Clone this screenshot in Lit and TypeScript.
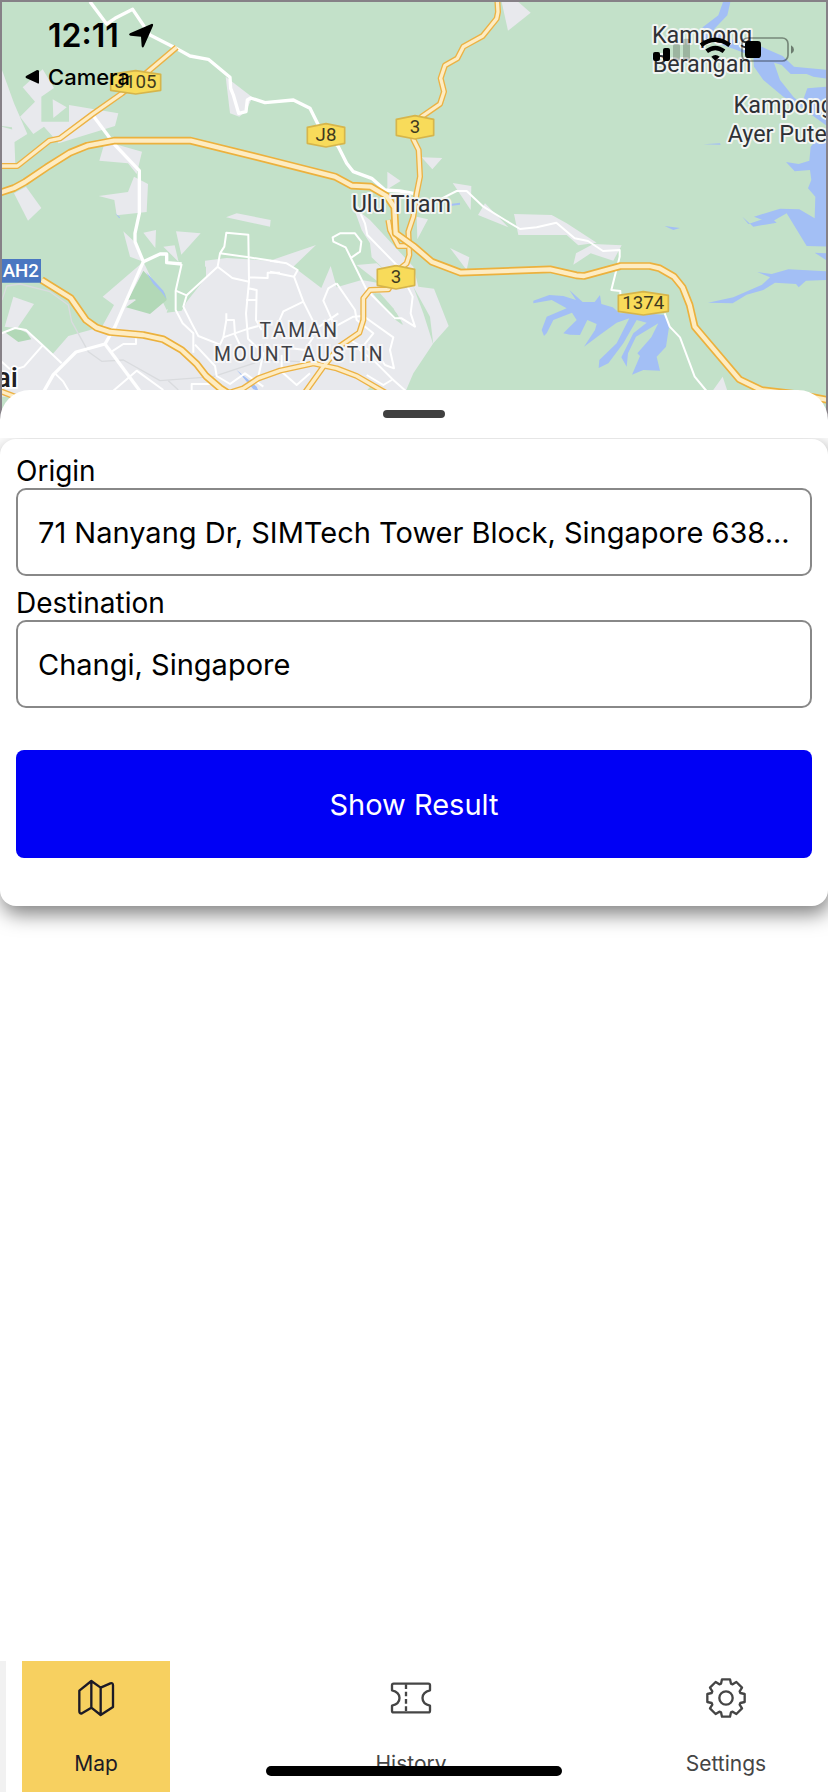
import { LitElement, html, svg, css } from "lit";
import { customElement, state } from "lit/decorators.js";

type Shield = { x: number; y: number; half: number; text: string };

const shields: Shield[] = [
  { x: 407, y: 247, half: 75, text: "J105" },
  { x: 978, y: 406, half: 56, text: "J8" },
  { x: 1245, y: 382, half: 56, text: "3" },
  { x: 1188, y: 832, half: 56, text: "3" },
  { x: 1930, y: 910, half: 75, text: "1374" },
];

const highways = [
  "M0 578 42 564 75 546 140 502 210 458 262 437 342 422H572L815 482 1005 530 1055 557 1112 560 1160 588 1183 622 1187 700 1240 738 1295 785 1382 818 1650 808 1729 826 1752 828 1862 798H1949L1979 805 2022 830 2048 862 2069 915 2084 980 2218 1138 2284 1170 2394 1183 2484 1200",
  "M125 840 212 894 258 960 290 983 330 996 430 1005 490 1018 545 1050 590 1092 618 1128 660 1164 700 1190",
];

const mainRoads = [
  "M0 498H52L148 422 180 415 278 342 366 280 440 218 530 142",
  "M1492 0 1494 36 1490 56 1448 108 1390 140 1372 175 1335 196 1322 235 1332 275 1320 312 1265 350 1240 385V418L1256 450 1260 530 1250 580 1240 650 1225 695 1228 765 1220 790 1205 802 1165 868 1110 870 1090 895V960L1078 998 1020 1038 970 1100 916 1176",
  "M1165 660 1170 690 1195 738H1222",
  "M0 1173 50 1192",
  "M690 1178 730 1165 775 1135 840 1112 940 1090 1010 1105 1070 1128 1160 1180",
];

const whiteRoads = [
  "M270 5 320 72 345 55 398 28 450 105 525 143 570 168 625 178 690 232 692 265 700 285 716 340 738 335 742 300 752 294 795 308 880 300 930 325 955 375 1015 440 1040 490 1060 515 1115 535 1155 570 1200 573 1240 580",
  "M278 345 345 435 418 512V640L405 700V725L430 785 345 980 315 1032 228 1056 160 1124 128 1180",
  "M315 1032 422 1176",
  "M430 785 480 762H500V788L545 792",
];

const streets = [
  "M1320 598 1370 573H1400L1450 620 1515 660 1560 687 1610 682 1669 668 1724 715 1764 723 1809 753 1859 750V770L1834 870 1861 873V890",
  "M1994 940 2009 980 2040 1012 2084 1130 2122 1176",
  "M545 792 527 872V930L548 970 580 1000V1058",
  "M527 872 560 886 550 920 575 970 595 1008 660 1034 670 1012 745 986 775 978",
  "M560 886 653 800 660 760 673 740 679 698 745 704 747 845 697 834 653 800M660 760 747 772 840 786M747 832 803 834V818H840",
  "M747 845 738 940 744 1016 790 1060 775 1130M745 865 770 870 768 960 785 990M738 900H770M679 940V960L670 1012M679 960H702L705 1004 720 1035",
  "M5 1000 45 984 78 990 128 1036 185 1090M128 1036 72 1100 40 1110M5 1085 30 1108M165 1120 190 1145 210 1180",
  "M340 1172 410 1112 490 1170M335 1055 370 1032H408V1015M585 1034 645 1098 650 1128 690 1152 735 1120 790 1160M575 1172V1152H640",
  "M1072 620 1095 670 1102 705 1190 795 1238 890 1232 940 1245 980 1205 955H1185L1100 870 1037 742 1000 725 998 712 1020 700H1065L1084 725 1080 755 1055 772",
  "M810 782 860 790 893 810 882 830 810 815M882 830 910 905 950 985 1015 940M910 905 850 934 830 980M1010 850 985 865 970 902 1005 980 1060 950 1090 948 1180 1012 1170 1050 1182 1105 1155 1095 1130 1060 1085 1040 1050 1020",
  "M1010 850 1065 930 1070 960 1120 1000 1080 1050 1130 1090 1180 1140 1225 1180M1100 1125 1150 1155 1175 1140M940 1010 915 1050 840 1040 810 1060M845 1065V1115L890 1155 930 1120",
];

const urban = [
  "M6 210 42 310 82 402 40 428 36 382 6 378Z",
  "M68 262 128 208 162 264 124 290V365H207V315L355 340 345 378 176 430 132 380 100 402 60 350 105 305Z",
  "M158 298 200 322 160 354Z",
  "M6 380 42 390 46 494 6 492Z",
  "M315 424 426 455 410 522 384 490 298 482Z",
  "M402 530 444 552 440 636 350 646 343 600 296 588 384 576Z",
  "M42 580 78 560 124 624 84 662Z",
  "M677 230 757 292 738 334 718 350 690 340Z",
  "M1505 6H1555L1592 38 1524 92Z",
  "M1265 472 1327 474 1297 508ZM1162 515 1202 543 1162 568ZM1358 549 1414 558 1412 630Z",
  "M678 652 710 640 812 660 810 680Z",
  "M370 694 398 720 430 785 390 770ZM430 698 468 690 466 744ZM528 694 602 700 544 764ZM490 740 524 736 536 786Z",
  "M430 785 308 890 342 915 306 980 205 1008 158 1062 130 1036 80 990 6 996V1190H1210L1240 1120 1300 1030 1346 978 1302 866 1255 860 1240 800 1110 660 1060 620 1085 690 1110 730 1115 772 1164 820 1130 790 1070 795 1140 850 1085 840 1010 862 992 798 964 864 880 800 948 735 810 782 680 774 615 782V830L500 930Z",
  "M40 890 102 912 52 985 14 980Z",
  "M1250 650 1284 658 1252 718ZM1350 744 1408 772 1400 810ZM1455 610 1525 682 1434 645ZM1542 642 1655 645 1700 670 1790 728 1735 736 1700 705H1555Z",
  "M1728 760 1780 732 1865 736 1840 782 1772 760 1720 794Z",
  "M2138 1172 2168 1130 2182 1172ZM1644 648 1660 648 1680 664 1644 668Z",
];

const parks = [
  "M430 812 495 880 500 900 450 942 378 922 408 900 404 898 384 900Z",
  "M14 996 50 984 80 998 94 1018 55 1026Z",
];

const greens = [
  "M1118 870 1190 940 1210 975 1165 930ZM1240 860 1290 950 1300 1034 1270 940ZM1100 1172 1115 1155 1140 1174Z",
  "M548 784 618 800V832L560 905 545 932 500 938Z",
  "M1118 880 1140 880 1180 925 1208 975 1180 955Z",
];

const water = [
  "M2169 6H2191L2182 46 2142 88 2170 112 2240 130 2280 138 2348 168 2382 200 2484 210V236L2440 230 2420 222H2372L2345 195 2322 188 2340 240 2380 290 2405 312 2422 265 2484 260V740L2420 738 2360 640 2310 668 2262 650 2340 626 2398 628 2444 655 2446 590 2424 565 2434 540 2430 510 2384 514 2358 486 2396 492 2428 482 2432 440 2484 380 2395 316 2350 290 2290 240 2262 200 2260 170 2210 150 2110 115 2108 82 2155 46Z",
  "M2110 433 2160 430 2162 434ZM1994 678 2040 684 2020 690ZM2227 650 2245 672 2310 650 2330 668 2260 680Z",
  "M2444 758 2484 760V784ZM2272 816 2315 822 2365 808 2484 814V840L2418 842 2396 862 2388 852 2325 848 2290 870 2240 884 2198 910 2124 908 2200 892 2286 854 2310 832Z",
  "M1600 902 1648 885 1690 888 1728 900 1708 870 1748 906 1784 906 1800 885 1804 912 1838 922 1860 940 1920 938 1995 945 2008 975 1998 1040 1970 1070 1980 1112 1930 1110 1896 1124 1920 1068 1912 1060 1954 1012 1975 970 1908 1010 1884 1060 1880 1100 1864 1072 1900 1000 1940 968 1910 960 1870 1030 1825 1090 1796 1104 1798 1080 1850 1030 1888 955 1850 968 1800 1004 1752 1040 1785 990 1790 972 1762 960 1740 1005 1710 1004 1690 1000 1730 960 1716 938 1660 960 1640 1000 1632 1008 1625 990 1640 950 1700 925 1655 900 1600 910Z",
  "M1350 612 1380 608V614L1350 618ZM345 640 360 652 358 655ZM438 816 490 872 500 898 484 876 460 852ZM710 1110 770 1160 775 1172 760 1168ZM670 1074 685 1085 678 1090Z",
];

const shield = (s: Shield) => svg`
  <path class="shield" d="M${s.x - s.half} ${s.y - 24}L${s.x} ${s.y - 35} ${s.x + s.half} ${s.y - 24}V${s.y + 24}L${s.x} ${s.y + 35} ${s.x - s.half} ${s.y + 24}Z"></path>
  <text class="shield-text" x=${s.x} y=${s.y + 18}>${s.text}</text>`;

const paths = (cls: string, list: string[]) => list.map((d) => svg`<path class=${cls} d=${d}></path>`);

@customElement("road-map")
class RoadMap extends LitElement {
  static styles = css`
    :host { display: block; }
    svg { display: block; width: 100%; height: 436px; background: #c3e1c9; }
    path { fill: none; stroke-linejoin: round; }
    .urban { fill: #e8e9ed; }
    .green { fill: #c3e1c9; }
    .park { fill: #b2d8b7; }
    .water { fill: #a3bff5; }
    .rail { stroke: #d9dbde; stroke-width: 4; }
    .street { stroke: #fff; stroke-width: 6; }
    .white { stroke: #fff; stroke-width: 10; }
    .main-edge { stroke: #ecb244; stroke-width: 18; }
    .main-fill { stroke: #feecc2; stroke-width: 10; }
    .high-edge { stroke: #ecb13d; stroke-width: 23; }
    .high-fill { stroke: #feecc2; stroke-width: 13; }
    .shield { fill: #f8db5a; stroke: #d6b54b; stroke-width: 5; }
    text { font-family: Roboto, "Liberation Sans", sans-serif; }
    .shield-text { font-size: 56px; text-anchor: middle; fill: #3f3a20; }
    .ah { fill: #4a77c1; }
    .ah-text { font-size: 56px; font-weight: 500; fill: #fff; }
    .place { font-size: 70px; fill: #2f3136; stroke: #f2f5f3; stroke-width: 12; paint-order: stroke; stroke-linejoin: round; text-anchor: middle; }
    .district { font-size: 58px; letter-spacing: 8px; fill: #3f4146; stroke: #f6f6f8; stroke-width: 12; paint-order: stroke; text-anchor: middle; }
    .city { font-size: 84px; font-weight: 500; fill: #1f2023; stroke: #fff; stroke-width: 10; paint-order: stroke; text-anchor: end; }
  `;

  render() {
    return html`<svg viewBox="6 6 2472 1308" preserveAspectRatio="xMidYMin slice" role="img" aria-label="Map of Ulu Tiram">
      ${paths("urban", urban)} ${paths("green", greens)} ${paths("park", parks)} ${paths("water", water)}
      <path class="rail" d="M6 900 20 858 60 852 150 875 205 915 215 965 265 1055 305 1084 370 1080 480 1142 640 1130 790 1080 900 1085M505 1142 535 1170"></path>
      ${paths("street", streets)} ${paths("white", whiteRoads)}
      ${paths("main-edge", mainRoads)} ${paths("main-fill", mainRoads)}
      ${paths("high-edge", highways)} ${paths("high-fill", highways)}
      ${shields.map(shield)}
      <path class="ah" d="M0 777H123V848H0Z"></path>
      <text class="ah-text" x="8" y="832">AH2</text>
      <text class="place" x="1204" y="635">Ulu Tiram</text>
      <text class="place" x="2106" y="129">Kampong</text>
      <text class="place" x="2106" y="215">Berangan</text>
      <text class="place" x="2351" y="339">Kampong</text>
      <text class="place" x="2351" y="425">Ayer Puteh</text>
      <text class="district" x="899" y="1011">TAMAN</text>
      <text class="district" x="899" y="1083">MOUNT AUSTIN</text>
      <text class="city" x="54" y="1162">ai</text>
    </svg>`;
  }
}

const toothPath = (() => {
  const pts: string[] = [];
  for (let k = 0; k < 8; k++) {
    const a = (k * Math.PI) / 4;
    for (const [x, y] of [[-15, -43], [-12, -56], [12, -56], [15, -43]]) {
      pts.push(`${(x * Math.cos(a) - y * Math.sin(a)).toFixed(1)} ${(x * Math.sin(a) + y * Math.cos(a)).toFixed(1)}`);
    }
  }
  return `M${pts.join("L")}Z`;
})();

const tabs = [
  {
    name: "Map",
    icon: svg`<path d="M-50-22-14-51 14-31 43-44Q51-47 51-38V27L14 51-14 29-42 46Q-50 48-50 40ZM-14-51V29M14-31V51"></path>`,
  },
  {
    name: "History",
    icon: svg`<path d="M-52-43H52Q57-43 57-38V-23C27-16 27 16 57 23V38Q57 43 52 43H-52Q-57 43-57 38V23C-27 16-27-16-57-23V-38Q-57-43-52-43Z"></path><path d="M-15-41V43" stroke-dasharray="14 8"></path>`,
  },
  {
    name: "Settings",
    icon: svg`<path d=${toothPath}></path><circle r="20"></circle>`,
  },
];

@customElement("app-root")
class AppRoot extends LitElement {
  @state() private active = "Map";

  static styles = css`
    :host {
      display: flex; flex-direction: column; position: relative; min-height: 100vh;
      background: #fff; color: #000; font-family: Inter, "Liberation Sans", sans-serif;
      overflow: hidden;
    }
    .map { border: 2px solid #868187; border-bottom: 0; }
    .status {
      position: absolute; top: 0; left: 0; right: 0; padding: 16px 34px 0 24px;
      display: flex; justify-content: space-between; align-items: flex-start;
    }
    .clock { display: flex; align-items: center; gap: 9px; padding-left: 24px; font-size: 32px; line-height: 40px; font-weight: 600; }
    .back { display: flex; align-items: center; gap: 8px; font-size: 22px; line-height: 42px; font-weight: 500; color: inherit; text-decoration: none; }
    .status svg { display: block; }
    .signals { margin-top: 20px; }
    .grip { position: relative; z-index: 1; margin-top: -48px; height: 48px; background: #fff; border-radius: 30px 30px 0 0; display: flex; align-items: center; justify-content: center; }
    .handle { width: 62px; height: 8px; border-radius: 4px; background: #404040; }
    .card { margin-top: 1px; padding: 16px 16px 48px; background: #fff; border-radius: 16px; box-shadow: 2px 8px 20px rgba(0, 0, 0, 0.5); display: flex; flex-direction: column; }
    .field { display: flex; flex-direction: column; margin-bottom: 11px; }
    label { font-size: 28px; line-height: 33px; }
    input {
      box-sizing: border-box; width: 100%; height: 88px; padding: 0 20px; border: 2px solid #888; border-radius: 10px;
      font: inherit; font-size: 29px; color: #000; background: #fff; text-overflow: ellipsis;
    }
    .submit { margin-top: 31px; height: 108px; border: 0; border-radius: 8px; background: #0000f5; color: #fff; font: inherit; font-size: 29px; }
    .nav { margin-top: auto; display: flex; justify-content: space-between; padding: 0 28px 0 16px; border-left: 6px solid #f1f1f1; }
    .tab {
      width: 148px; padding: 15px 0 16px; border: 0; background: none; color: #454545;
      font: inherit; font-size: 21px; line-height: 24px; display: flex; flex-direction: column; align-items: center; gap: 32px;
    }
    .tab.active { background: #f7d060; color: #1c1a26; }
    .tab svg { width: 44px; height: 44px; fill: none; stroke: currentColor; stroke-width: 7; stroke-linejoin: round; }
    .home { position: absolute; bottom: 16px; left: 0; right: 0; margin: 0 auto; width: 296px; height: 10px; border-radius: 5px; background: #000; }
  `;

  render() {
    return html`
      <road-map class="map"></road-map>
      <div class="status">
        <div>
          <div class="clock">
            <span>12:11</span>
            <svg width="26" height="26" viewBox="390 70 78 78"><path d="M462 72Q467 72 465 78L438 140Q434 147 431 140L429 111 398 108Q390 106 396 101Z"></path></svg>
          </div>
          <a class="back" href="#">
            <svg width="16" height="16" viewBox="0 0 16 16"><path d="M15 2V14Q15 15 13 14L2 9Q1 8 2 7L13 1Q15 1 15 2Z"></path></svg>
            Camera
          </a>
        </div>
        <svg class="signals" width="141" height="27" viewBox="315 108 423 81" role="img" aria-label="Signal, Wi-Fi and battery">
          <rect x="315" y="156" width="21" height="27" rx="6"></rect>
          <rect x="345" y="144" width="21" height="39" rx="6"></rect>
          <rect x="375" y="132" width="21" height="51" rx="6" opacity=".2"></rect>
          <rect x="405" y="116" width="21" height="67" rx="6" opacity=".2"></rect>
          <g fill="none" stroke="#000" stroke-width="13"><path d="M459 136Q502 103 545 136"></path><path d="M476 154Q502 134 528 154"></path></g>
          <path d="M490 170Q502 160 515 170L502 183Z"></path>
          <rect x="582" y="114" width="138" height="69" rx="17" fill="none" stroke="#000" stroke-opacity=".4" stroke-width="5"></rect>
          <rect x="591" y="123" width="48" height="51" rx="10"></rect>
          <path d="M729 136Q738 141 738 149T729 161Z" opacity=".45"></path>
        </svg>
      </div>
      <div class="grip"><div class="handle"></div></div>
      <form class="card" @submit=${(e: Event) => e.preventDefault()}>
        <div class="field">
          <label for="origin">Origin</label>
          <input id="origin" type="text" value="71 Nanyang Dr, SIMTech Tower Block, Singapore 638..." />
        </div>
        <div class="field">
          <label for="destination">Destination</label>
          <input id="destination" type="text" value="Changi, Singapore" />
        </div>
        <button class="submit" type="submit">Show Result</button>
      </form>
      <nav class="nav">
        ${tabs.map(
          (t) => html`<button class="tab ${this.active === t.name ? "active" : ""}" type="button" @click=${() => (this.active = t.name)}>
            <svg viewBox="-66 -66 132 132" aria-hidden="true">${t.icon}</svg>
            <span>${t.name}</span>
          </button>`
        )}
      </nav>
      <div class="home"></div>
    `;
  }
}
